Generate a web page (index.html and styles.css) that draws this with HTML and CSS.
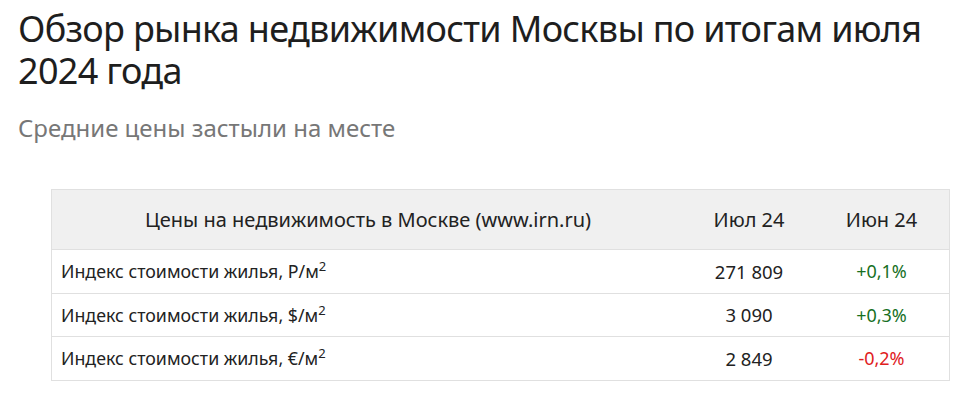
FILE: index.html
```html
<!DOCTYPE html>
<html lang="ru">
<head>
<meta charset="utf-8">
<link rel="stylesheet" href="styles.css">
</head>
<body>
<div class="page">
  <h1 class="title">Обзор рынка недвижимости Москвы по итогам июля 2024 года</h1>
  <p class="subtitle">Средние цены застыли на месте</p>
  <table class="prices">
    <thead>
      <tr>
        <th class="c-name">Цены на недвижимость в Москве (www.irn.ru)</th>
        <th class="c-val">Июл 24</th>
        <th class="c-chg">Июн 24</th>
      </tr>
    </thead>
    <tbody>
      <tr>
        <td class="c-name">Индекс стоимости жилья, Р/м<sup>2</sup></td>
        <td class="c-val">271 809</td>
        <td class="c-chg up">+0,1%</td>
      </tr>
      <tr>
        <td class="c-name">Индекс стоимости жилья, $/м<sup>2</sup></td>
        <td class="c-val">3 090</td>
        <td class="c-chg up">+0,3%</td>
      </tr>
      <tr>
        <td class="c-name">Индекс стоимости жилья, €/м<sup>2</sup></td>
        <td class="c-val">2 849</td>
        <td class="c-chg down">-0,2%</td>
      </tr>
    </tbody>
  </table>
</div>
</body>
</html>
```
FILE: styles.css
```css
html, body {
  margin: 0;
  padding: 0;
  background: #fff;
}
.page {
  padding: 8px 18px 0 18px;
  font-family: "Noto Sans", "Open Sans", sans-serif;
  color: #222;
}
.title {
  margin: 0;
  font-size: 36px;
  line-height: 42px;
  font-weight: 400;
  letter-spacing: -0.7px;
  color: #1e1e1e;
}
.subtitle {
  margin: 21px 0 0 0;
  font-size: 24px;
  line-height: 30px;
  color: #777;
}
.prices {
  margin: 46px 0 0 33px;
  width: 899px;
  border-collapse: collapse;
  font-size: 17.8px;
  color: #222;
}
.prices th {
  background: #f0f0f0;
  font-weight: 400;
  font-size: 20px;
  height: 59px;
  padding: 0;
  border: 1px solid #e0e0e0;
  border-left: none;
  border-right: none;
  text-align: center;
}
.prices td {
  height: 42.5px;
  border-bottom: 1px solid #e0e0e0;
  padding: 0;
}
.prices th:first-child, .prices td:first-child {
  border-left: 1px solid #e0e0e0;
}
.prices th:last-child, .prices td:last-child {
  border-right: 1px solid #e0e0e0;
}
.prices td.c-name {
  text-align: left;
  padding-left: 9px;
}
.c-val {
  width: 130px;
  text-align: center;
}
.c-chg {
  width: 135px;
  text-align: center;
}
.prices td.c-val {
  font-size: 18.5px;
}
.prices td.c-chg {
  font-size: 18px;
}
.prices sup {
  font-size: 13px;
  line-height: 0;
}
.up { color: #17701f; }
.down { color: #e0201d; }
```
